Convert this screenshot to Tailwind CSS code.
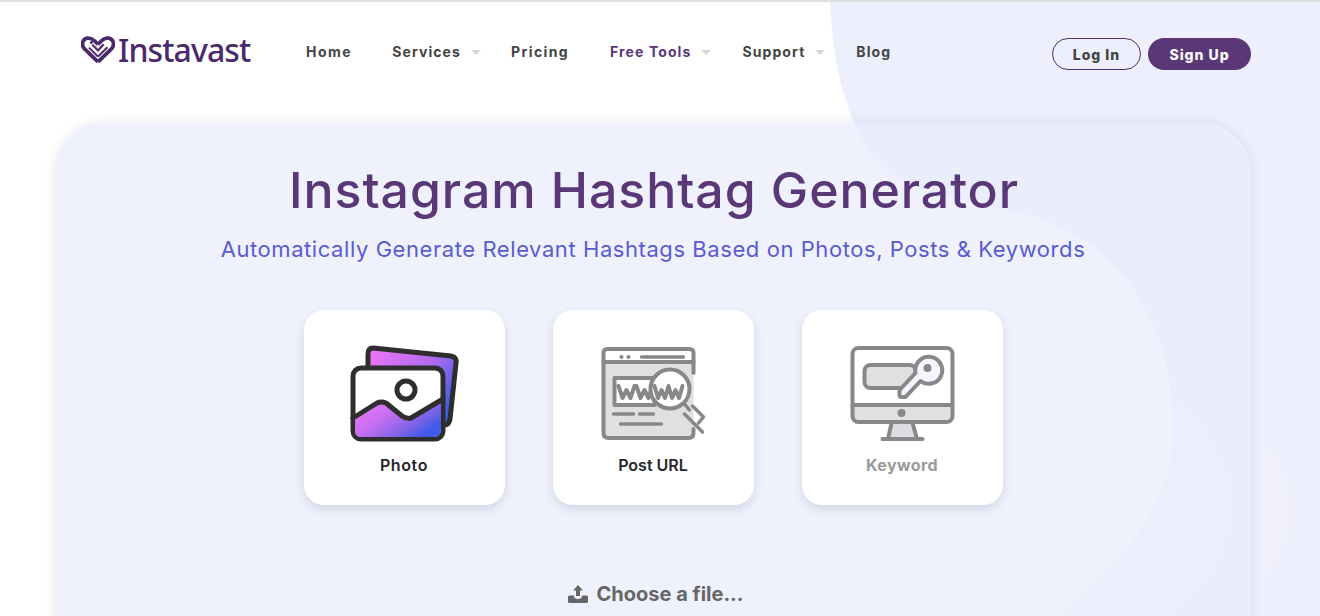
<!doctype html>
<html lang="en">
<head>
<meta charset="utf-8">
<title>Instagram Hashtag Generator</title>
<script src="https://cdn.jsdelivr.net/npm/@tailwindcss/browser@4"></script>
</head>
<body class="bg-white">
<div class="relative w-[1320px] h-[616px] overflow-hidden bg-white border-t-2 border-[#dfdfe3] font-['Inter',sans-serif]">
  <svg class="absolute left-0 top-[-2px] w-[1320px] h-[616px]" viewBox="0 0 1320 616" aria-hidden="true">
    <path d="M830 0 C832 60 845 130 885 170 C920 195 980 203 1020 213 C1110 235 1173 310 1173 430 C1173 490 1140 540 1100 575 L1060 616 L1320 616 L1320 0 Z" fill="#eeeffc"/>
    <circle cx="1190" cy="510" r="102" fill="#eff0fc"/>
  </svg>

  <header class="relative flex items-center h-[100px] pl-[81px] pr-[69px]">
    <a class="flex items-center w-[225px] mt-[-4px]">
      <svg class="w-[34px] h-[28px] shrink-0" viewBox="0 0 36 29" aria-hidden="true">
        <path d="M18 27 L3.5 13 C0 9 1.5 3 6.5 2 C10 1.3 12.5 3 14.5 5 L18 8.5 M18 27 L32.5 13 C36 9 34.5 3 29.5 2 C26 1.3 23.5 3 21.5 5 L18 8.5" fill="none" stroke="#4a2a6a" stroke-width="4"/>
        <path d="M18 21.5 L8.5 12 M18 21.5 L28 11.5" fill="none" stroke="#4a2a6a" stroke-width="2.2"/>
        <path d="M12 9 L18 15 L24 8.5" fill="none" stroke="#4a2a6a" stroke-width="2.4"/>
        <circle cx="11" cy="6.5" r="1.6" fill="#4a2a6a"/>
      </svg>
      <span class="ml-[3px] text-[32px] leading-none font-medium tracking-[-0.9px] text-[#4a2a6a] font-['Noto_Sans',sans-serif]">Instavast</span>
    </a>
    <nav class="flex items-center text-[14px] font-bold tracking-[1.1px] text-[#444] mt-[-2px]">
      <a class="tracking-[1.5px]">Home</a>
      <a class="ml-[40px]">Services</a>
      <span class="ml-[10px] mt-[2px] w-0 h-0 border-x-[5px] border-x-transparent border-t-[5px] border-t-[#d6d6d6]"></span>
      <a class="ml-[30px] tracking-[1.4px]">Pricing</a>
      <a class="ml-[41px] text-[#5a3777]">Free Tools</a>
      <span class="ml-[10px] mt-[2px] w-0 h-0 border-x-[5px] border-x-transparent border-t-[5px] border-t-[#d6d6d6]"></span>
      <a class="ml-[31px]">Support</a>
      <span class="ml-[10px] mt-[2px] w-0 h-0 border-x-[5px] border-x-transparent border-t-[5px] border-t-[#d6d6d6]"></span>
      <a class="ml-[31px]">Blog</a>
    </nav>
    <div class="ml-auto flex items-center gap-[7px] mt-[4px] text-[14px] font-extrabold tracking-[1px]">
      <a class="flex items-center justify-center w-[89px] h-[32px] rounded-full border border-[#4f2d72] text-[#444]">Log In</a>
      <a class="flex items-center justify-center w-[103px] h-[32px] rounded-full bg-[#5a3777] text-white">Sign Up</a>
    </div>
  </header>

  <main class="relative ml-[55px] mt-[21px] w-[1196px] h-[600px] rounded-[50px] bg-[#eff2fc] shadow-[0_0_12px_rgba(60,60,120,0.12)] overflow-hidden">
    <svg class="absolute left-[-55px] top-[-123px] w-[1320px] h-[616px]" viewBox="0 0 1320 616" aria-hidden="true">
      <path d="M830 0 C832 60 845 130 885 170 C920 195 980 203 1020 213 C1110 235 1173 310 1173 430 C1173 490 1140 540 1100 575 L1060 616 L1320 616 L1320 0 Z" fill="#eaedfb"/>
      <circle cx="1105" cy="505" r="125" fill="#eff2fc" fill-opacity="0.35"/>
      <path d="M830 0 C832 60 845 130 885 170 C920 195 980 203 1020 213 C1110 235 1173 310 1173 430 C1173 490 1140 540 1100 575 L1060 616 L0 616 L0 0 Z" fill="#eff2fc"/>
    </svg>
    <div class="relative flex flex-col items-center">
      <h1 class="mt-[34px] pl-[2px] text-[50px] leading-[66px] font-[450] text-[#5a3777] tracking-[0.93px]">Instagram Hashtag Generator</h1>
      <p class="mt-[11px] text-[22px] leading-[30px] text-[#5b5bd0] tracking-[0.57px]">Automatically Generate Relevant Hashtags Based on Photos, Posts &amp; Keywords</p>
      <div class="mt-[46px] flex gap-[48px]">
        <button class="flex flex-col items-center w-[201px] h-[195px] rounded-[20px] bg-white shadow-[0_4px_10px_rgba(60,70,110,0.16)]">
          <svg class="mt-[34px] w-[110px] h-[100px]" viewBox="349 344 110 100" aria-hidden="true">
            <defs>
              <linearGradient id="g1" x1="0" y1="0" x2="1" y2="0.7"><stop offset="0" stop-color="#f076f7"/><stop offset="0.55" stop-color="#b36cec"/><stop offset="1" stop-color="#3f5be8"/></linearGradient>
              <linearGradient id="g2" x1="0" y1="0" x2="1" y2="0.6"><stop offset="0" stop-color="#f076f7"/><stop offset="0.45" stop-color="#c56ff0"/><stop offset="0.8" stop-color="#7a63e6"/><stop offset="1" stop-color="#3f5be8"/></linearGradient>
            </defs>
            <path d="M373 348 L451 356 Q457 357 456 363 L450 419 Q449 425 444 425 L368 425 L368 354 Q368 348 373 348 Z" fill="url(#g1)" stroke="#2e2e2e" stroke-width="5" stroke-linejoin="round"/>
            <rect x="353" y="368" width="90" height="71" rx="8" fill="#fff" stroke="#2e2e2e" stroke-width="5"/>
            <path d="M355 417 L378 403 Q381 401 386 403 L403 416 Q407 419 412 418 L441 401 L441 429 Q441 437 433 437 L361 437 Q355 437 355 431 Z" fill="url(#g2)"/>
            <path d="M353 418 L377 403 Q381 401 386 403 L402 416 Q406 419 411 418 L443 399" fill="none" stroke="#2e2e2e" stroke-width="5" stroke-linecap="round" stroke-linejoin="round"/>
            <circle cx="406" cy="390" r="9" fill="#fff" stroke="#2e2e2e" stroke-width="5"/>
          </svg>
          <span class="mt-[10px] text-[16px] leading-[22px] font-semibold tracking-[0.6px] text-[#26262b]">Photo</span>
        </button>
        <button class="flex flex-col items-center w-[201px] h-[195px] rounded-[20px] bg-white shadow-[0_4px_10px_rgba(60,70,110,0.16)]">
          <svg class="mt-[34px] w-[110px] h-[100px]" viewBox="598.5 344 110 100" aria-hidden="true">
            <path d="M604 362 H694 V433 Q694 438 689 438 H609 Q604 438 604 433 Z" fill="#e0e0e0"/>
            <g fill="none" stroke="#888" stroke-width="4" stroke-linecap="round" stroke-linejoin="round">
              <path d="M694 373 V353 Q694 349 690 349 H608 Q604 349 604 353 V433 Q604 438 609 438 H689 Q694 438 694 433 V429"/>
              <path d="M604 362 H694"/>
              <path d="M642 357 H684" stroke-width="3.5"/>
              <rect x="615" y="378" width="40" height="27" fill="#fff" stroke-linecap="butt"/>
              <path d="M614 414 H634 M640 414 H654 M621 424 H662" stroke-width="3.5"/>
              <path d="M619 386 L623 398 L627 390 L631 398 L635 386 M637 386 L641 398 L645 390 L649 398 L653 386"/>
              <circle cx="670.5" cy="389" r="19.5" fill="#fff"/>
              <path d="M655 386 L658.5 398 L662 390 L665.5 398 L669 386 L672.5 398 L676 390 L679.5 398 L683 386"/>
              <path d="M685 404 L690 410 M693 406 L704 417 L699 423 M685 414 L703 432" stroke-width="3.5"/>
            </g>
            <circle cx="622" cy="357" r="2" fill="#888"/>
            <circle cx="629" cy="357" r="2" fill="#888"/>
          </svg>
          <span class="mt-[10px] text-[16px] leading-[22px] font-semibold text-[#26262b]">Post URL</span>
        </button>
        <button class="flex flex-col items-center w-[201px] h-[195px] rounded-[20px] bg-white shadow-[0_4px_10px_rgba(60,70,110,0.16)]">
          <svg class="mt-[34px] w-[110px] h-[100px]" viewBox="847.5 344 110 100" aria-hidden="true">
            <path d="M853 405 H952 V418 Q952 421 948 421 H857 Q853 421 853 418 Z" fill="#e0e0e0"/>
            <path d="M892 423 H913 L917 437 H888 Z" fill="#dcdce2"/>
            <g fill="none" stroke="#888" stroke-width="4" stroke-linecap="round" stroke-linejoin="round">
              <rect x="853" y="348" width="100" height="74" rx="6"/>
              <path d="M853 405 H953"/>
              <path d="M892 423 L889 437 M913 423 L917 437 M883 439 H923"/>
              <rect x="865" y="365" width="51" height="23" rx="6" fill="#e0e0e0"/>
              <path d="M916 373 L901 389 Q900 390 900 392 V395 Q900 397 902 397 H906 L921 381 A13.5 13.5 0 1 0 916 373 Z" fill="#f5f5ff"/>
            </g>
            <circle cx="928" cy="368" r="4" fill="#888"/>
            <circle cx="902" cy="413" r="4" fill="#888"/>
          </svg>
          <span class="mt-[10px] text-[16px] leading-[22px] font-bold tracking-[0.4px] text-[#9a9a9a]">Keyword</span>
        </button>
      </div>
      <div class="mt-[75px] pl-[5px] flex items-center justify-center text-[#666] text-[20px] leading-[28px] font-bold">
        <svg class="w-[20px] h-[18px] mr-[9px]" viewBox="0 0 20 18" fill="#666" aria-hidden="true">
          <path d="M10 0 L15 5.5 H12 V11 H8 V5.5 H5 Z"/>
          <path d="M1.5 10.5 H5.8 Q6 14 10 14 Q14 14 14.2 10.5 H18.5 Q20 10.5 20 12 V16.5 Q20 18 18.5 18 H1.5 Q0 18 0 16.5 V12 Q0 10.5 1.5 10.5 Z"/>
        </svg>
        <span>Choose a file...</span>
      </div>
    </div>
  </main>
</div>
</body>
</html>
